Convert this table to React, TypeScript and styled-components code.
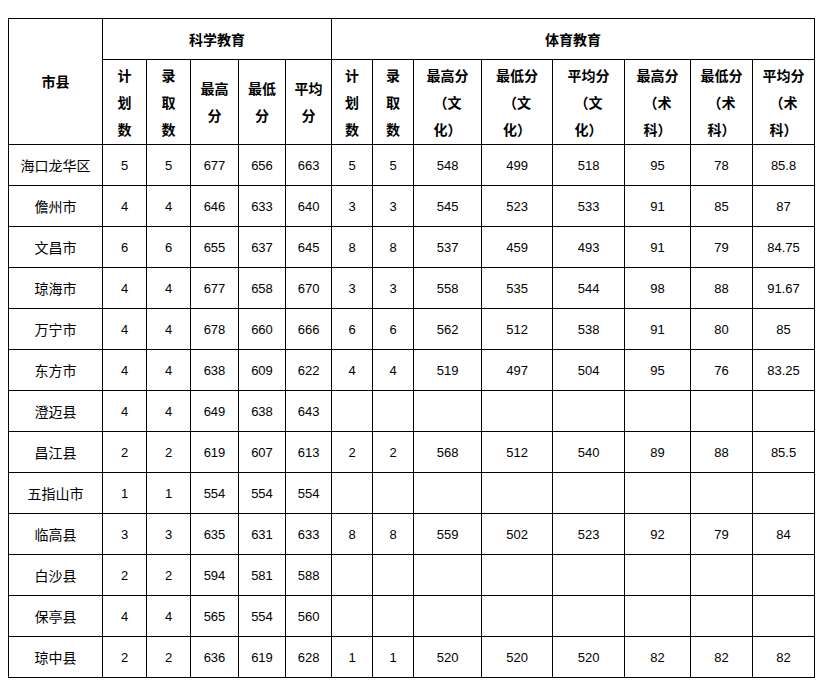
import React from "react";
import styled, { createGlobalStyle } from "styled-components";

const GlobalStyle = createGlobalStyle`
  html, body {
    margin: 0;
    padding: 0;
    background: #ffffff;
  }
  body {
    font-family: "Liberation Sans", "Noto Sans CJK SC", sans-serif;
    color: #000;
  }
`;

const colWidths = [94, 44, 44, 48, 47, 46, 41, 41, 68, 71, 72, 66, 62, 62];

const subHeads: string[][] = [
  ["计", "划", "数"],
  ["录", "取", "数"],
  ["最高", "分"],
  ["最低", "分"],
  ["平均", "分"],
  ["计", "划", "数"],
  ["录", "取", "数"],
  ["最高分", "（文", "化）"],
  ["最低分", "（文", "化）"],
  ["平均分", "（文", "化）"],
  ["最高分", "（术", "科）"],
  ["最低分", "（术", "科）"],
  ["平均分", "（术", "科）"],
];

const rows: [string, string[]][] = [
  ["海口龙华区", ["5", "5", "677", "656", "663", "5", "5", "548", "499", "518", "95", "78", "85.8"]],
  ["儋州市", ["4", "4", "646", "633", "640", "3", "3", "545", "523", "533", "91", "85", "87"]],
  ["文昌市", ["6", "6", "655", "637", "645", "8", "8", "537", "459", "493", "91", "79", "84.75"]],
  ["琼海市", ["4", "4", "677", "658", "670", "3", "3", "558", "535", "544", "98", "88", "91.67"]],
  ["万宁市", ["4", "4", "678", "660", "666", "6", "6", "562", "512", "538", "91", "80", "85"]],
  ["东方市", ["4", "4", "638", "609", "622", "4", "4", "519", "497", "504", "95", "76", "83.25"]],
  ["澄迈县", ["4", "4", "649", "638", "643", "", "", "", "", "", "", "", ""]],
  ["昌江县", ["2", "2", "619", "607", "613", "2", "2", "568", "512", "540", "89", "88", "85.5"]],
  ["五指山市", ["1", "1", "554", "554", "554", "", "", "", "", "", "", "", ""]],
  ["临高县", ["3", "3", "635", "631", "633", "8", "8", "559", "502", "523", "92", "79", "84"]],
  ["白沙县", ["2", "2", "594", "581", "588", "", "", "", "", "", "", "", ""]],
  ["保亭县", ["4", "4", "565", "554", "560", "", "", "", "", "", "", "", ""]],
  ["琼中县", ["2", "2", "636", "619", "628", "1", "1", "520", "520", "520", "82", "82", "82"]],
];

export default function App() {
  return (
    <Page>
      <GlobalStyle />
      <Table>
        <colgroup>
          {colWidths.map((w, i) => (
            <col key={i} style={{ width: w }} />
          ))}
        </colgroup>
        <thead>
          <tr>
            <HeadCell rowSpan={2} $height={40}>
              市县
            </HeadCell>
            <HeadCell colSpan={5} $height={40}>
              科学教育
            </HeadCell>
            <HeadCell colSpan={8} $height={40}>
              体育教育
            </HeadCell>
          </tr>
          <tr>
            {subHeads.map((lines, i) => (
              <HeadCell key={i} $height={84}>
                {lines.map((l, j) => (
                  <Line key={j}>{l}</Line>
                ))}
              </HeadCell>
            ))}
          </tr>
        </thead>
        <tbody>
          {rows.map(([name, vals]) => (
            <tr key={name}>
              <NameCell>{name}</NameCell>
              {vals.map((v, i) => (
                <NumCell key={i}>{v}</NumCell>
              ))}
            </tr>
          ))}
        </tbody>
      </Table>
    </Page>
  );
}

const Page = styled.div`
  padding: 18px 0 0 8px;
`;

const Table = styled.table`
  border-collapse: collapse;
  table-layout: fixed;
  width: 807px;
  border: 1px solid #000;
`;

const HeadCell = styled.th<{ $height: number }>`
  border: 1px solid #000;
  height: ${(p) => p.$height}px;
  padding: 0;
  font-family: "Noto Sans CJK SC", sans-serif;
  font-size: 14px;
  font-weight: bold;
  line-height: 27px;
  text-align: center;
  vertical-align: middle;
`;

const Line = styled.div`
  white-space: nowrap;
`;

const NameCell = styled.td`
  border: 1px solid #000;
  height: 40px;
  padding: 0;
  font-family: "Noto Sans CJK SC", sans-serif;
  font-size: 14px;
  text-align: center;
  vertical-align: middle;
`;

const NumCell = styled.td`
  border: 1px solid #000;
  height: 40px;
  padding: 0;
  font-family: "Liberation Sans", sans-serif;
  font-size: 13px;
  text-align: center;
  vertical-align: middle;
`;
